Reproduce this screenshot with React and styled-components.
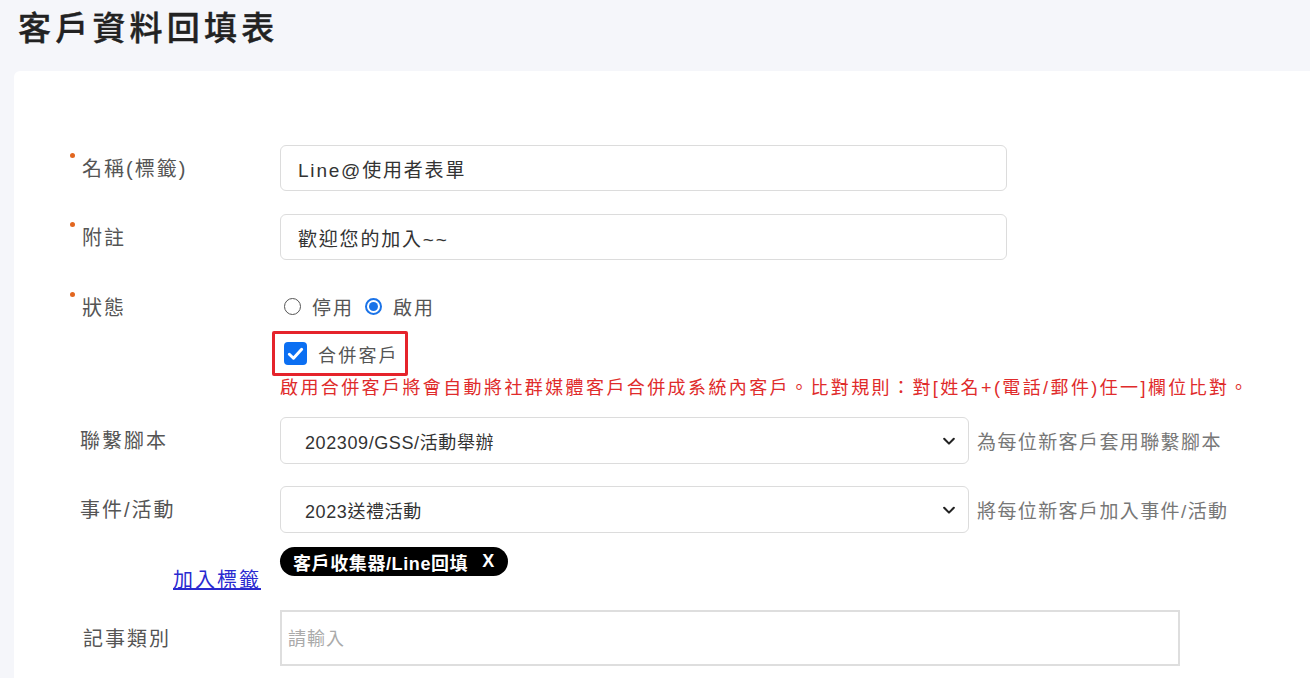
import styled, { createGlobalStyle } from "styled-components";

const GlobalStyle = createGlobalStyle`
  html, body {
    margin: 0;
    padding: 0;
    background: #f5f6fa;
    font-family: "Liberation Sans", Arial, "Noto Sans CJK TC", sans-serif;
    overflow: hidden;
  }
`;

const Page = styled.div`
  width: 1310px;
  height: 678px;
  overflow: hidden;
`;

const Title = styled.h1`
  margin: 0;
  padding: 9px 0 0 18px;
  height: 71px;
  box-sizing: border-box;
  font-size: 33px;
  font-weight: 500;
  letter-spacing: 4.2px;
  color: #222;
  line-height: 40px;
  -webkit-text-stroke: 0.4px #222;
`;

const Card = styled.div`
  margin-left: 14px;
  background: #fff;
  border-top-left-radius: 6px;
  padding: 74px 0 40px 56px;
  min-height: 700px;
  box-sizing: border-box;
`;

const Row = styled.div`
  display: flex;
  align-items: ${(p) => p.$align || "center"};
  margin-bottom: ${(p) => p.$gap ?? 23}px;
`;

const Label = styled.div`
  position: relative;
  width: 210px;
  flex-shrink: 0;
  box-sizing: border-box;
  padding-left: ${(p) => p.$pad ?? 12}px;
  font-size: 20px;
  letter-spacing: 2px;
  color: #555;
  margin-top: -2px;

  &::before {
    content: "";
    display: ${(p) => (p.$required ? "block" : "none")};
    position: absolute;
    left: 0;
    top: 0;
    width: 5px;
    height: 5px;
    border-radius: 50%;
    background: #e2661f;
  }
`;

const LinkLabel = styled.a`
  width: 191px;
  flex-shrink: 0;
  text-align: right;
  font-size: 20px;
  letter-spacing: 2px;
  color: #2a2ad0;
  text-decoration: underline;
  margin-right: 19px;
  margin-top: 17px;
`;

const TextInput = styled.div`
  width: 727px;
  height: 46px;
  box-sizing: border-box;
  border: 1px solid #dcdcdc;
  border-radius: 6px;
  padding-left: 17px;
  display: flex;
  align-items: center;
  font-size: 19px;
  letter-spacing: 1.8px;
  color: #333;
`;

const Select = styled.div`
  width: 689px;
  height: 47px;
  box-sizing: border-box;
  border: 1px solid #dcdcdc;
  border-radius: 6px;
  padding: 0 12px 0 24px;
  display: flex;
  align-items: center;
  justify-content: space-between;
  font-size: 18px;
  letter-spacing: 0.6px;
  color: #333;
`;

const Help = styled.span`
  margin-left: 8px;
  font-size: 19px;
  letter-spacing: 1.4px;
  color: #777;
`;

const RadioGroup = styled.div`
  display: flex;
  align-items: center;
  padding-left: 4px;
  height: 30px;
`;

const Radio = styled.span`
  width: 17px;
  height: 17px;
  box-sizing: border-box;
  border-radius: 50%;
  border: ${(p) => (p.$checked ? "2px solid #1a73e8" : "1.5px solid #555")};
  display: inline-flex;
  align-items: center;
  justify-content: center;
  margin-right: 11px;

  &::after {
    content: "";
    display: ${(p) => (p.$checked ? "block" : "none")};
    width: 9px;
    height: 9px;
    border-radius: 50%;
    background: #1a73e8;
  }
`;

const OptionText = styled.span`
  font-size: 19px;
  letter-spacing: 2px;
  color: #555;
  margin-right: 11px;
`;

const Highlight = styled.div`
  margin-left: -8px;
  width: 136px;
  height: 45px;
  box-sizing: border-box;
  border: 3px solid #e5232b;
  border-radius: 2px;
  display: flex;
  align-items: center;
  padding-left: 9px;
`;

const Checkbox = styled.span`
  width: 23px;
  height: 23px;
  border-radius: 4px;
  background: #0b6ff2;
  display: inline-flex;
  align-items: center;
  justify-content: center;
  margin-right: 11px;
`;

const CheckText = styled.span`
  font-size: 18px;
  letter-spacing: 2.2px;
  color: #555;
`;

const Warning = styled.div`
  font-size: 18px;
  letter-spacing: 2.4px;
  color: #e02b2b;
  line-height: 22px;
  margin-top: 1px;
  white-space: nowrap;
`;

const Stack = styled.div`
  display: flex;
  flex-direction: column;
`;

const Chip = styled.span`
  display: inline-flex;
  align-items: center;
  height: 29px;
  padding: 0 13px;
  border-radius: 15px;
  background: #000;
  color: #fff;
  font-size: 18px;
  font-weight: 700;
  letter-spacing: 0.6px;
`;

const ChipClose = styled.span`
  margin-left: 14px;
`;

const TextArea = styled.div`
  width: 900px;
  height: 56px;
  box-sizing: border-box;
  border: 2px solid #dedede;
  padding: 12px 6px;
  font-size: 18px;
  letter-spacing: 1px;
  color: #aaa;
`;

const Chevron = () => (
  <svg width="14" height="14" viewBox="0 0 16 16">
    <path d="M2.5 5.5 8 11l5.5-5.5" fill="none" stroke="#222" strokeWidth="2.4" strokeLinecap="round" strokeLinejoin="round" />
  </svg>
);

const Check = () => (
  <svg width="19" height="19" viewBox="0 0 16 16">
    <path d="M2.8 8.6 6.3 12 13.2 4.4" fill="none" stroke="#fff" strokeWidth="2.5" strokeLinecap="round" strokeLinejoin="round" />
  </svg>
);

export default function App() {
  return (
    <Page>
      <GlobalStyle />
      <Title>客戶資料回填表</Title>
      <Card>
        <Row>
          <Label $required>名稱(標籤)</Label>
          <TextInput>Line@使用者表單</TextInput>
        </Row>
        <Row $gap={31}>
          <Label $required>附註</Label>
          <TextInput>歡迎您的加入~~</TextInput>
        </Row>
        <Row $align="flex-start" $gap={18}>
          <Label $required style={{ marginTop: 1 }}>狀態</Label>
          <Stack>
            <RadioGroup>
              <Radio />
              <OptionText>停用</OptionText>
              <Radio $checked />
              <OptionText>啟用</OptionText>
            </RadioGroup>
            <div style={{ height: 10 }} />
            <Highlight>
              <Checkbox>
                <Check />
              </Checkbox>
              <CheckText>合併客戶</CheckText>
            </Highlight>
            <Warning>
              啟用合併客戶將會自動將社群媒體客戶合併成系統內客戶。比對規則：對[姓名+(電話/郵件)任一]欄位比對。
            </Warning>
          </Stack>
        </Row>
        <Row $gap={22}>
          <Label $pad={10}>聯繫腳本</Label>
          <Select>
            202309/GSS/活動舉辦
            <Chevron />
          </Select>
          <Help>為每位新客戶套用聯繫腳本</Help>
        </Row>
        <Row $gap={14}>
          <Label $pad={10}>事件/活動</Label>
          <Select>
            2023送禮活動
            <Chevron />
          </Select>
          <Help>將每位新客戶加入事件/活動</Help>
        </Row>
        <Row $align="flex-start" $gap={17}>
          <LinkLabel href="#">加入標籤</LinkLabel>
          <Chip>
            客戶收集器/Line回填
            <ChipClose>X</ChipClose>
          </Chip>
        </Row>
        <Row>
          <Label $pad={13}>記事類別</Label>
          <TextArea>請輸入</TextArea>
        </Row>
      </Card>
    </Page>
  );
}
